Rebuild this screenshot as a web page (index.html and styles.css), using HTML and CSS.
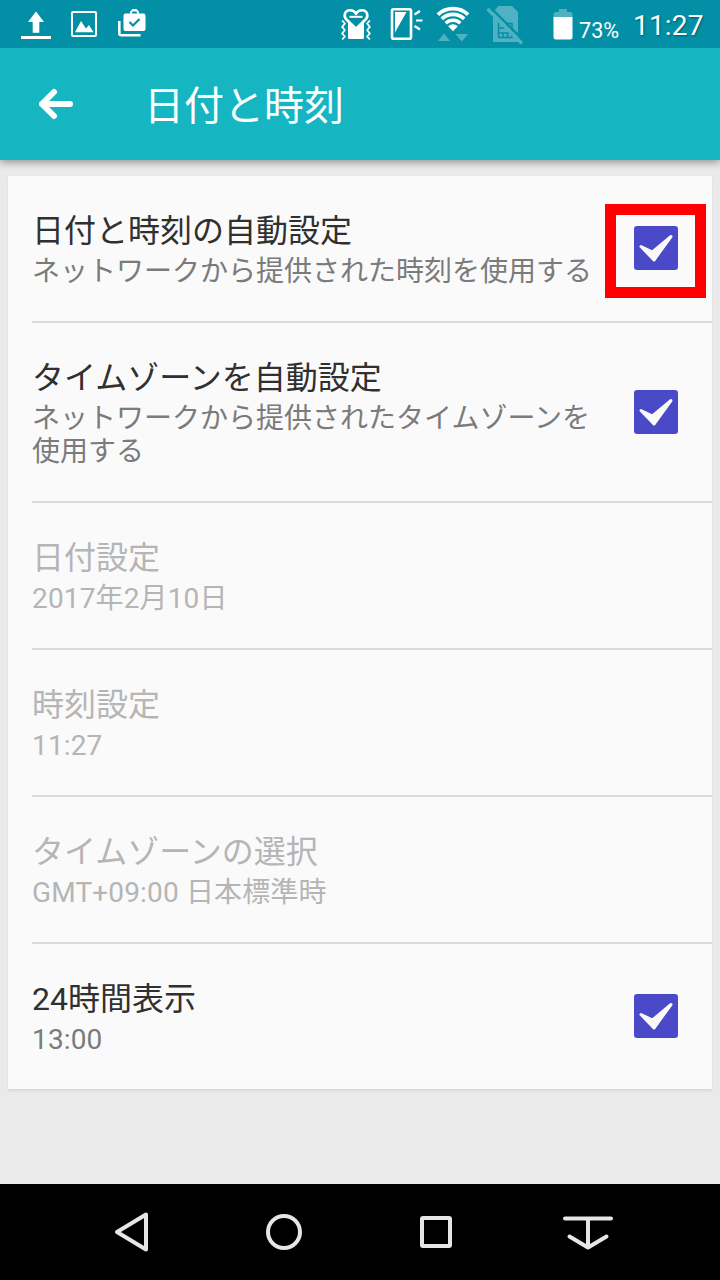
FILE: index.html
```
<!DOCTYPE html>
<html lang="ja">
<head>
    <meta charset="UTF-8">
    <meta name="viewport" content="width=device-width, initial-scale=1.0">
    <title>日付と時刻</title>
    <link rel="stylesheet" href="styles.css">
</head>
<body>
    <div class="status-bar">
        <div class="notifications">
            <svg width="30" height="48" viewBox="0 0 30 48">
                <path fill="#fff" d="M15 11.500L23 22h-4.700v10.700h-6.600V22H7zM0 36h30v3H0z"/>
            </svg>
            <svg width="28" height="48" viewBox="0 0 28 48">
                <rect x="2" y="12" width="24" height="24" rx="1" fill="none" stroke="#fff" stroke-width="2"/>
                <path fill="#fff" d="M5 32.300l6-11.300 5 7.500 3-3.500 4.500 7.300z"/>
            </svg>
            <svg width="30" height="48" viewBox="0 0 30 48">
                <path fill="none" stroke="#fff" stroke-width="2.600" d="M2.300 21v12q0 2.200 2.200 2.200H23.500"/>
                <path fill="#fff" d="M8.500 13.500H13v-1.700l2.500-2.800h4l2.500 2.800v1.700h4.500q2 0 2 2V29q0 2-2 2h-18q-2 0-2-2V15.500q0-2 2-2zm6.500 0h5v-1.300l-.8-.8h-3.400l-.8.8z"/>
                <path fill="none" stroke="#0390a7" stroke-width="2.200" d="M12.500 22l3.500 3.500 6.500-6.500"/>
            </svg>
        </div>

        <div class="system">
            <svg width="32" height="48" viewBox="0 0 32 48">
                <path fill="#fff" d="M8 23h16v14.500q0 1.500-1.500 1.500h-13Q8 39 8 37.500z"/>
                <path fill="#0390a7" stroke="#fff" stroke-width="2.600" stroke-linejoin="round" d="M16 28.700L6.200 19.300C3 15.500 5.200 10.300 9.800 10.300c3 0 5 1.200 6.200 3.700 1.200-2.500 3.200-3.700 6.200-3.700 4.600 0 6.800 5.200 3.600 9z"/>
                <path fill="#fff" d="M9.500 15.800h13v2h-13z"/>
                <path fill="none" stroke="#fff" stroke-width="1.800" d="M2.200 20.500l2.600 3-2.600 3.500 2.600 3-2.600 3.500 2.600 3-2.600 3M29.800 20.500l-2.600 3 2.600 3.500-2.600 3 2.600 3.500-2.600 3 2.600 3"/>
            </svg>
            <svg class="flash" width="34" height="48" viewBox="0 0 34 48">
                <rect x="3" y="9.300" width="19" height="29.400" rx="1.500" fill="none" stroke="#fff" stroke-width="2.600"/>
                <path fill="#fff" d="M6 12h11.500L6 32.500z"/>
                <path fill="none" stroke="#fff" stroke-width="2.200" d="M25.500 14.500l5.500-3.500M27 20.500h6.500M25.500 26l5.500 3.500"/>
            </svg>
            <svg class="wifi" width="34" height="48" viewBox="0 0 34 48">
                <path fill="none" stroke="#fff" stroke-width="3.600" d="M1.900 14.600a22 22 0 0 1 30.200 0M5.800 18.900a16.200 16.200 0 0 1 22.400 0M9.700 23.200a10.500 10.500 0 0 1 14.600 0"/>
                <path fill="#fff" d="M12.200 26.200a7 7 0 0 1 9.600 0L17 31.200z"/>
                <path fill="#4fb1c1" d="M2 41l6-7.500 6 7.500zM19.500 34H32l-6.200 7.500z"/>
            </svg>
            <svg class="sim" width="38" height="48" viewBox="0 0 38 48">
                <path fill="#4fb1c1" d="M12.500 6H26l6 6v30H7V12z"/>
                <path fill="none" stroke="#0390a7" stroke-width="1.500" d="M12.500 22.500v15h13.500V23.500h-4.500v4.500h-9M12.500 33h13.500M17 33v4.500M21.500 33v4.500"/>
                <path fill="none" stroke="#0390a7" stroke-width="2.400" d="M3.500 6.500L39 42"/>
                <path fill="none" stroke="#4fb1c1" stroke-width="3.400" d="M1.500 9l34.500 34.500"/>
            </svg>
            <svg class="battery" width="20" height="48" viewBox="0 0 20 48">
                <path fill="#4fb1c1" d="M6 9h8v3h3q2.500 0 2.500 2.500V18H.5v-3.500Q.5 12 3 12h3z"/>
                <path fill="#fff" d="M.5 17h19v20q0 2.500-2.500 2.500H3Q.5 39.500.5 37z"/>
            </svg>
            <span class="percent">73%</span>
            <span class="clock">11:27</span>
        </div>
    </div>

    <header class="toolbar">
        <svg width="36" height="32" viewBox="0 0 36 32">
            <path fill="none" stroke="#fff" stroke-width="6" stroke-linecap="round" stroke-linejoin="round" d="M16 4L4 16l12 12M4 16h28"/>
        </svg>
        <h1>日付と時刻</h1>
    </header>

    <main>
        <ul class="settings">
            <li class="item">
                <div class="text">
                    <div class="title">日付と時刻の自動設定</div>
                    <div class="summary">ネットワークから提供された時刻を使用する</div>
                </div>
                <div class="checkbox highlighted">
                    <svg width="44" height="44" viewBox="0 0 44 44"><path d="M7 20.500L18.500 26 37 10.500 20 34z"/></svg>
                </div>
            </li>
            <li class="item">
                <div class="text">
                    <div class="title">タイムゾーンを自動設定</div>
                    <div class="summary">ネットワークから提供されたタイムゾーンを<br>使用する</div>
                </div>
                <div class="checkbox">
                    <svg width="44" height="44" viewBox="0 0 44 44"><path d="M7 20.500L18.500 26 37 10.500 20 34z"/></svg>
                </div>
            </li>
            <li class="item disabled">
                <div class="text">
                    <div class="title">日付設定</div>
                    <div class="summary value">2017年2月10日</div>
                </div>
            </li>
            <li class="item disabled">
                <div class="text">
                    <div class="title">時刻設定</div>
                    <div class="summary value">11:27</div>
                </div>
            </li>
            <li class="item disabled">
                <div class="text">
                    <div class="title">タイムゾーンの選択</div>
                    <div class="summary value">GMT+09:00 日本標準時</div>
                </div>
            </li>
            <li class="item">
                <div class="text">
                    <div class="title">24時間表示</div>
                    <div class="summary value">13:00</div>
                </div>
                <div class="checkbox">
                    <svg width="44" height="44" viewBox="0 0 44 44"><path d="M7 20.500L18.500 26 37 10.500 20 34z"/></svg>
                </div>
            </li>
        </ul>
    </main>

    <nav class="nav-bar">
        <svg width="152" height="96" viewBox="0 0 152 96"><path d="M61 48L90 30.500v35z"/></svg>
        <svg width="152" height="96" viewBox="0 0 152 96"><circle cx="76" cy="48" r="16"/></svg>
        <svg width="152" height="96" viewBox="0 0 152 96"><rect x="62" y="34" width="28" height="28" rx="1"/></svg>
        <svg width="152" height="96" viewBox="0 0 152 96"><path d="M53 34.500h46M76 34.500V63M57.500 52.500L76 63.500l18.500-11"/></svg>
    </nav>
</body>
</html>
```

FILE: styles.css
```
body {
    margin: 0;
    height: 1280px;
    display: flex;
    flex-direction: column;
    font-family: Roboto, "Noto Sans CJK JP", sans-serif;
    background-color: #eaeaea;
    overflow: hidden;
}
svg {
    display: block;
    flex: none;
}

/* status bar */
.status-bar {
    position: relative;
    height: 48px;
    padding: 0 16px 0 21px;
    display: flex;
    justify-content: space-between;
    background-color: #0390a7;
    color: white;
}
.notifications {
    display: flex;
    gap: 19px;
}
.system {
    display: flex;
}
.flash {
    margin-left: 17px;
}
.wifi {
    margin-left: 13px;
}
.sim {
    margin-left: 16px;
}
.battery {
    margin-left: 29px;
}
.percent {
    width: 41px;
    margin-left: 6px;
    font-size: 21.6px;
    line-height: 61px;
}
.clock {
    width: 71px;
    margin-left: 13px;
    font-size: 28px;
    line-height: 51px;
    letter-spacing: 0.2px;
    text-shadow: 1px 1px 2px rgba(0,0,0,0.4);
}

/* toolbar */
.toolbar {
    height: 112px;
    padding-left: 38px;
    display: flex;
    align-items: center;
    background-color: #15b5c1;
    color: white;
    box-shadow: 0 2px 8px rgba(0,0,0,0.4);
}
h1 {
    margin: 0 0 2px 70px;
    font-size: 40px;
    font-weight: normal;
}

/* list */
main {
    flex: 1;
    padding: 16px 8px 0;
}
.settings {
    margin: 0;
    padding: 0 0 0 24px;
    list-style: none;
    background-color: #fafafa;
    box-shadow: 0 2px 2px rgba(0,0,0,0.08);
}
.item {
    min-height: 145px;
    padding: 35px 34px 33px 0;
    box-sizing: border-box;
    display: flex;
    align-items: center;
    justify-content: space-between;
    border-bottom: 2px solid #dcdcdc;
}
.item:last-child {
    border-bottom: none;
}
.text {
    width: 570px;
}
.title {
    margin-bottom: 4px;
    font-size: 32px;
    line-height: 40px;
    color: #303030;
}
.summary {
    font-size: 28px;
    line-height: 33px;
    color: #7b7b7b;
    white-space: nowrap;
}
.value {
    letter-spacing: 0.15px;
}
.disabled .title,
.disabled .summary {
    color: #b5b5b5;
}
.checkbox {
    position: relative;
    width: 44px;
    height: 44px;
    margin-bottom: 3px;
    border-radius: 3px;
    background-color: #4a49c8;
}
.checkbox path {
    fill: #fafafa;
    stroke: #fafafa;
    stroke-width: 3;
    stroke-linejoin: round;
}
.highlighted::after {
    content: "";
    position: absolute;
    top: -22px;
    left: -29px;
    width: 79px;
    height: 72px;
    border: 11px solid #ff0000;
}

/* navigation bar */
.nav-bar {
    height: 96px;
    padding: 0 56px;
    display: flex;
    background-color: black;
}
.nav-bar path,
.nav-bar circle,
.nav-bar rect {
    fill: none;
    stroke: #e6e6e6;
    stroke-width: 4;
    stroke-linecap: round;
    stroke-linejoin: round;
}
```
